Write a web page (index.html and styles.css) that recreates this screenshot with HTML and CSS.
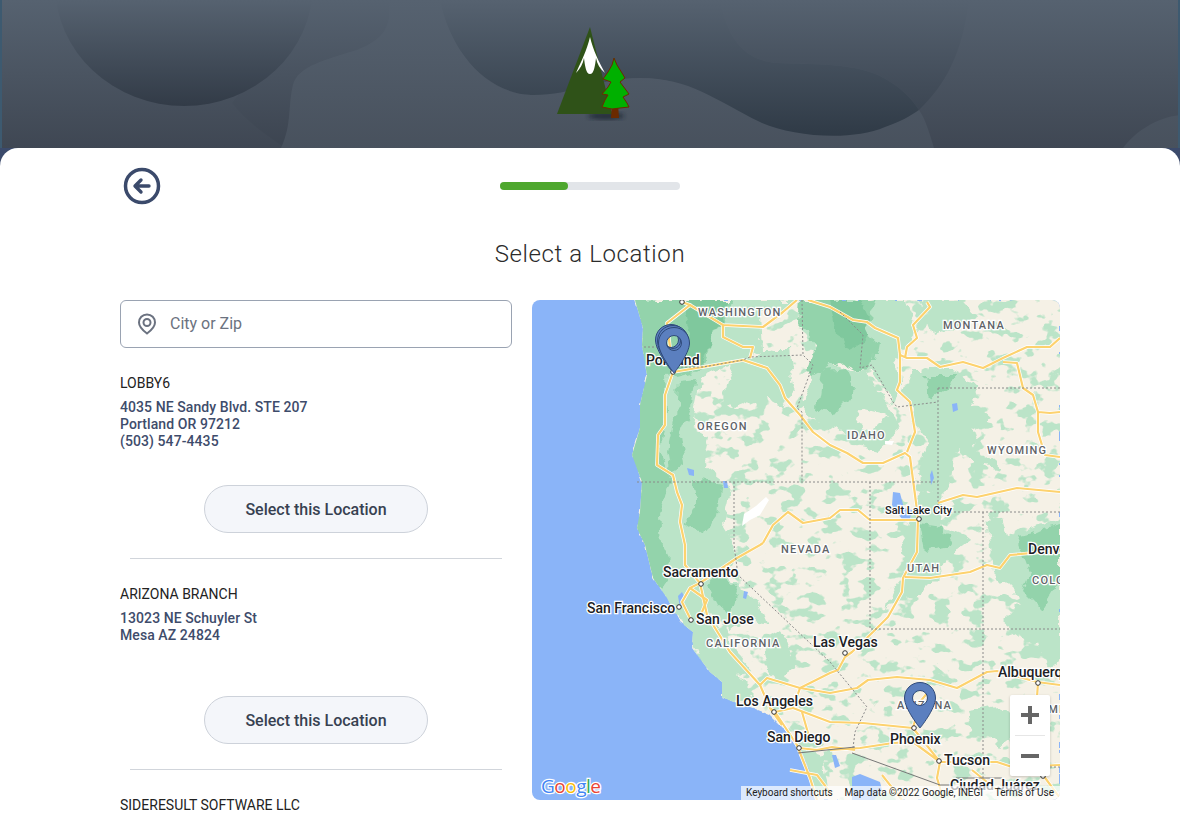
FILE: index.html
```html
<!DOCTYPE html>
<html lang="en">
<head>
<meta charset="utf-8">
<title>Select a Location</title>
<link rel="stylesheet" href="styles.css">
</head>
<body>
<header class="hero">
  <svg class="hero-art" viewBox="0 0 1180 148" aria-hidden="true">
    <defs>
      <linearGradient id="deepA" gradientUnits="userSpaceOnUse" x1="0" y1="0" x2="0" y2="106">
        <stop offset="0" stop-color="#566270"/><stop offset="1" stop-color="#323b47"/>
      </linearGradient>
      <linearGradient id="deepC" gradientUnits="userSpaceOnUse" x1="0" y1="0" x2="0" y2="136">
        <stop offset="0" stop-color="#566270"/><stop offset="1" stop-color="#2f3a46"/>
      </linearGradient>
      <linearGradient id="soft" gradientUnits="userSpaceOnUse" x1="0" y1="0" x2="0" y2="148">
        <stop offset="0" stop-color="#566270"/><stop offset="1" stop-color="#333c48"/>
      </linearGradient>
      <linearGradient id="lift" gradientUnits="userSpaceOnUse" x1="0" y1="0" x2="0" y2="148">
        <stop offset="0" stop-color="#566270"/><stop offset="1" stop-color="#48515d"/>
      </linearGradient>
      <linearGradient id="dim" gradientUnits="userSpaceOnUse" x1="0" y1="0" x2="0" y2="148">
        <stop offset="0" stop-color="#566270"/><stop offset="1" stop-color="#3c4450"/>
      </linearGradient>
      <filter id="blur"><feGaussianBlur stdDeviation="2"/></filter>
    </defs>
    <path class="shape-dim" d="M312 0L232 103C250 125 268 136 285 148C290 125 288 105 293 85C298 66 325 60 357 50C388 38 392 22 388 0Z"/>
    <ellipse class="shape-a" cx="184" cy="-15" rx="129" ry="121"/>
    <path class="shape-soft" d="M720 0C728 40 745 61 778 63C810 65 850 62 880 76C898 85 910 96 919 110C945 85 962 55 969 0Z"/>
    <path class="shape-deep" d="M440 0C450 50 485 93 531 95L640 78L919 110L919 120L881 140H700L560 110L500 110Z"/>
    <path class="shape-deep" d="M440 0H720C728 40 745 61 778 63C810 65 850 62 880 76C898 85 910 96 919 110C908 118 895 125 881 129C850 141 790 136 760 122C720 105 690 78 640 78C600 78 570 96 531 95C485 93 450 50 440 0Z"/>
    <path class="shape-lift" d="M388 0C392 22 388 38 357 50C325 60 298 66 293 85C288 105 292 125 281 148H934C930 135 926 120 919 110C910 116 900 122 885 127C850 142 790 136 760 122C715 100 690 78 640 78C600 78 570 96 531 95C485 93 450 50 440 0Z"/>
    <path class="shape-lift" d="M1123 148C1135 132 1155 118 1180 115V148Z"/>
    <ellipse class="logo-shadow" cx="606" cy="116" rx="18" ry="3.500" filter="url(#blur)"/>
    <path class="logo-mtn" d="M590 27L612 114H557Z"/>
    <path class="logo-snow" d="M590 37C593 50 599 62 605 73C600 69 597 64 596 58C595 66 594 74 590 74C586 74 585 66 584 58C583 64 580 69 576 73C581 62 587 50 590 37Z"/>
    <path class="logo-trunk" d="M612 104H618L619 118H611Z"/>
    <path class="logo-tree" d="M614 58L617 65L622 73L625 78L620 82L626 90L629 94L623 97L627 103L629 107L620 108L612 109L602 107L605 100L608 95L602 94L608 87L611 82L603 79L608 72L612 65Z"/>
  </svg>
</header>
<main class="panel">
  <div class="topbar">
    <a class="back" href="#" aria-label="Back">
      <svg viewBox="0 0 44 44" width="44" height="44" aria-hidden="true">
        <circle class="back-ring" cx="22" cy="22" r="16.500"/>
        <path class="back-arrow" d="M29 22H16M21 16L15 22L21 28"/>
      </svg>
    </a>
    <div class="progress"><div class="progress-fill"></div></div>
  </div>
  <h1 class="title">Select a Location</h1>
  <div class="columns">
    <section class="finder">
      <label class="search">
        <svg class="search-icon" viewBox="0 0 24 24" width="24" height="24" aria-hidden="true">
          <path class="search-pin" d="M12 2.500C7.400 2.500 4 6 4 10.500C4 14.500 7 17.800 12 21.500C17 17.800 20 14.500 20 10.500C20 6 16.600 2.500 12 2.500Z"/>
          <circle class="search-pin" cx="12" cy="10.500" r="3.500"/>
        </svg>
        <input class="search-input" type="text" placeholder="City or Zip">
      </label>
      <ul class="places">
        <li class="place">
          <h2 class="place-name">LOBBY6</h2>
          <p class="place-addr">4035 NE Sandy Blvd. STE 207<br>Portland OR 97212<br>(503) 547-4435</p>
          <button class="pick" type="button">Select this Location</button>
        </li>
        <li class="place">
          <h2 class="place-name">ARIZONA BRANCH</h2>
          <p class="place-addr">13023 NE Schuyler St<br>Mesa AZ 24824</p>
          <button class="pick" type="button">Select this Location</button>
        </li>
        <li class="place">
          <h2 class="place-name">SIDERESULT SOFTWARE LLC</h2>
        </li>
      </ul>
    </section>
    <section class="map">
      <svg class="map-art" viewBox="0 0 528 500" width="528" height="500" aria-label="Map of the western United States">
        <defs>
          <path id="pin" fill-rule="evenodd" d="M16 .5C7.400 .5 .5 7.300 .5 16C.5 27 16 46 16 46C16 46 31.500 27 31.500 16C31.500 7.300 24.600 .5 16 .5ZM16 8.500A7.500 7.500 0 1 1 16 23.500A7.500 7.500 0 1 1 16 8.500Z"/>
          <path id="landshape" d="M103 0L111 28L110 45L115 75L108 105L108 128L100 155L110 182L108 212L105 228L113 245L121 278L135 298L148 322L161 332L160 348L178 372L190 382L190 398L221 408L238 415L255 432L268 448L278 472L285 500H528V0Z"/>
          <clipPath id="landclip"><use href="#landshape"/></clipPath>
          <filter id="rough" x="-5%" y="-5%" width="110%" height="110%" color-interpolation-filters="sRGB">
            <feTurbulence type="fractalNoise" baseFrequency=".07" numOctaves="3" seed="4" result="n"/>
            <feDisplacementMap in="SourceGraphic" in2="n" scale="14" xChannelSelector="R" yChannelSelector="G"/>
          </filter>
          <filter id="coast" x="-5%" y="-5%" width="110%" height="110%" color-interpolation-filters="sRGB">
            <feTurbulence type="fractalNoise" baseFrequency=".12" numOctaves="2" seed="9" result="n"/>
            <feDisplacementMap in="SourceGraphic" in2="n" scale="4" xChannelSelector="R" yChannelSelector="G"/>
          </filter>
          <filter id="blotch" x="0" y="0" width="100%" height="100%" color-interpolation-filters="sRGB">
            <feTurbulence type="fractalNoise" baseFrequency=".055 .075" numOctaves="3" seed="11"/>
            <feColorMatrix type="matrix" values="0 0 0 0 .733  0 0 0 0 .894  0 0 0 0 .784  14 0 0 0 -7.900"/>
          </filter>
          <g id="roads">
            <path d="M150 2L158 5L135 23L141 72L133 95L133 125L126 135L125 165L141 175L145 192L150 205L148 222L153 245L153 265L168 283L175 315L198 352L228 385L238 408L243 412L265 445L278 478L285 500"/>
            <path d="M141 72L171 67L211 60L235 68L248 85L253 98L268 115L281 132L298 145L315 153L331 163L351 163L373 153L378 157L383 195L386 218"/>
            <path d="M158 5L191 25L191 37L211 47L221 47L218 58M191 25L231 27L251 12L265 0M276 0L298 7L321 20L335 22L343 28L366 38L368 55L368 82L365 90L378 102L383 132L375 152"/>
            <path d="M395 2L398 7L381 25L385 38L375 47L373 58M368 55L375 58L395 58L408 67L431 62L451 68L471 58L495 47L518 47L528 38M471 62L485 63L491 88L501 95L506 112L506 132L513 155L528 157M506 112L518 113L528 112"/>
            <path d="M406 203L431 195L445 197L485 188L528 192M231 243L241 225L256 212L271 223L298 218L308 210L326 210L338 220L358 220L386 220"/>
            <path d="M168 283L158 288L150 302L155 312L159 320M168 283L205 258L228 245L231 243M158 288L175 300L170 312"/>
            <path d="M386 218L385 252L371 278L370 292L356 317L341 332L320 352L313 357L306 370L298 373L268 388L261 408L243 412"/>
            <path d="M373 277L398 278L438 272L455 265L468 268L478 255L511 252L528 252"/>
            <path d="M268 388L298 393L325 388L336 380L365 377L398 380L425 388L455 372L465 371L505 382L528 385"/>
            <path d="M261 408L298 422L331 423L381 428L408 462L465 462L480 467L528 465M298 450L328 448L361 443L381 442L408 462"/>
            <path d="M506 383L503 425L511 475L528 498M381 428L388 402L396 392M408 462L405 478L411 498M267 448L285 450L300 447L323 450M258 470L285 475L300 495M350 475L370 500M440 470L465 490"/>
            <path d="M228 385L235 378L268 388M238 408L250 425M270 412L278 440"/>
          </g>
        </defs>
        <rect class="m-water" width="528" height="500"/>
        <use href="#landshape" class="m-land" filter="url(#coast)"/>
        <g clip-path="url(#landclip)">
          <rect class="blotch" x="100" width="428" height="500" filter="url(#blotch)"/>
          <g filter="url(#rough)">
            <path class="g-light" d="M95 0L103 60L100 150L100 230L121 285L150 325L175 375L200 405L225 395L205 375L222 372L195 340L175 310L195 330L215 320L235 325L225 300L205 290L195 270L205 250L190 225L198 185L172 165L178 138L160 128L170 78L230 50L228 15L270 0Z"/>
            <path class="g-mid" d="M95 0L103 60L100 150L100 230L118 280L128 290L142 270L130 245L128 215L140 175L128 150L135 110L132 78L170 68L180 40L200 0Z"/>
            <path class="g-mid" d="M145 80L165 78L160 108L148 135L152 165L140 172L136 150L143 120Z"/>
            <path class="g-dark" d="M150 0L195 0L180 40L168 64L150 60L158 35Z"/>
            <path class="g-mid" d="M162 178L190 183L185 215L170 235L155 225L165 200Z"/>
            <path class="g-mid" d="M175 285L192 270L205 295L198 315L185 305Z"/>
            <path class="g-light" d="M228 50L258 50L262 90L250 108L236 100L214 100L212 80Z"/>
            <path class="g-light" d="M202 60L240 75L250 95L225 100L200 110L190 100Z"/>
            <path class="g-mid" d="M270 0L345 0L362 40L345 62L330 72L305 60L290 85L275 70L285 45L268 25Z"/>
            <path class="g-dark" d="M298 0L328 0L340 30L325 50L305 40Z"/>
            <path class="g-light" d="M345 0L372 0L385 30L365 55L368 85L362 105L340 70L345 45L335 25Z"/>
            <path class="g-light" d="M300 65L330 72L358 105L368 130L345 150L325 145L306 130L285 125L272 105L282 75Z"/>
            <path class="g-mid" d="M290 70L315 68L325 90L305 115L285 110Z"/>
            <path class="m-land" d="M328 108L355 115L340 130L325 125Z"/>
            <path class="g-light" d="M385 0L430 0L445 18L420 30L400 38L395 15Z"/>
            <path class="g-light" d="M378 70L420 70L450 85L440 100L460 118L440 130L445 150L468 170L440 165L425 150L420 185L405 200L392 190L385 175L395 140L380 120L372 90Z"/>
            <path class="g-mid" d="M392 75L425 75L415 90L400 100Z"/>
            <path class="g-light" d="M388 195L406 195L410 228L440 240L420 255L405 275L385 295L365 300L355 312L360 290L375 270L370 240L378 215Z"/>
            <path class="g-mid" d="M390 225L410 228L420 245L395 250Z"/>
            <path class="g-light" d="M455 215L470 218L475 235L490 230L528 220V340L500 345L470 320L490 300L460 270Z"/>
            <path class="g-mid" d="M485 235L528 225V280L510 310L490 290L498 270Z"/>
            <path class="g-light" d="M505 335L528 320V360L515 365Z"/>
            <path class="g-light" d="M435 410L468 405L490 430L470 445L455 430L440 432Z"/>
            <path class="g-light" d="M230 345L250 330L262 365L248 385L235 370Z"/>
            <path class="g-light" d="M265 445L290 455L295 490L282 500L272 475Z"/>
          </g>
        </g>
        <path class="m-snow" d="M210 226L212 214L224 206L234 197L237 200L228 215L218 220Z"/>
        <path class="m-snow" d="M353 141L362 141L360 145L353 144Z"/>
        <path class="m-water" d="M361 192L368 193L372 208L380 210L378 220L372 222L365 212L360 205Z"/>
        <path class="m-water" d="M420 104L425 103L426 110L421 112Z"/>
        <path class="m-water" d="M155 168L162 170L162 176L157 175Z"/>
        <path class="m-water" d="M191 181L195 181L196 188L192 188Z"/>
        <path class="m-water" d="M212 291L216 292L214 299L211 298Z"/>
        <path class="m-water" d="M300 455L304 455L308 466L303 468Z"/>
        <path class="m-water" d="M320 477L328 474L348 482L350 490L342 500H320Z"/>
        <path class="m-water" d="M146 296L150 292L153 298L148 308Z"/>
        <path class="m-water" d="M398 175L400 170L402 178L399 185Z"/>

        <use href="#roads" class="road-case"/>
        <use href="#roads" class="road-line"/>

        <path class="border" d="M112 47H130M141 67L171 67L211 60L218 57L271 55M270 0L271 55L281 65L265 108L270 112L270 182M105 182H406M202 182V245L206 275L298 362L335 407L323 432L321 448"/>
        <path class="border" d="M308 12L331 35L328 68L340 65L361 102L365 107L406 102M406 88H528M406 88V212H420H528M338 182V329H528M451 212V478M528 467H500"/>
        <path class="mexico" d="M266 453L323 447M320 453L408 485H420L424 478H470L472 490"/>

        <g class="states">
          <text x="166" y="16">WASHINGTON</text>
          <text x="165" y="130">OREGON</text>
          <text x="411" y="29">MONTANA</text>
          <text x="315" y="139">IDAHO</text>
          <text x="455" y="154">WYOMING</text>
          <text x="249" y="253">NEVADA</text>
          <text x="375" y="272">UTAH</text>
          <text x="500" y="284">COLORADO</text>
          <text x="174" y="347">CALIFORNIA</text>
          <text x="365" y="409">ARIZONA</text>
          <text x="485" y="413">NEW MEXICO</text>
        </g>
        <g class="dots">
          <circle cx="150" cy="2" r="2.300"/><circle cx="141" cy="72" r="2.300"/><circle cx="387" cy="219" r="2.300"/>
          <circle cx="169" cy="284" r="2.300"/><circle cx="147" cy="307" r="2.300"/><circle cx="159" cy="320" r="2.300"/>
          <circle cx="242" cy="412" r="2.300"/><circle cx="267" cy="448" r="2.300"/><circle cx="313" cy="353" r="2.300"/>
          <circle cx="382" cy="428" r="2.300"/><circle cx="407" cy="461" r="2.300"/><circle cx="506" cy="383" r="2.300"/><circle cx="511" cy="476" r="2.300"/>
        </g>
        <g class="cities">
          <text x="114" y="65">Portland</text>
          <text class="city-small" x="353" y="214">Salt Lake City</text>
          <text x="131" y="277">Sacramento</text>
          <text x="55" y="313">San Francisco</text>
          <text x="164" y="324">San Jose</text>
          <text x="204" y="406">Los Angeles</text>
          <text x="235" y="442">San Diego</text>
          <text x="281" y="347">Las Vegas</text>
          <text x="358" y="444">Phoenix</text>
          <text x="412" y="465">Tucson</text>
          <text x="466" y="377">Albuquerque</text>
          <text x="496" y="254">Denver</text>
          <text x="418" y="490">Ciudad Juárez</text>
        </g>
        <g class="pins">
          <use href="#pin" x="123" y="24"/>
          <use href="#pin" x="125" y="25"/>
          <use href="#pin" x="126" y="27"/>
          <use href="#pin" x="372" y="382"/>
        </g>
      </svg>
      <div class="g-logo"><span class="g-b">G</span><span class="g-r">o</span><span class="g-y">o</span><span class="g-b">g</span><span class="g-g">l</span><span class="g-r">e</span></div>
      <div class="zoom-ctl">
        <div class="zoom-btn"><span class="zoom-h"></span><span class="zoom-v"></span></div>
        <div class="zoom-sep"></div>
        <div class="zoom-btn"><span class="zoom-h"></span></div>
      </div>
      <div class="attrib"><span>Keyboard shortcuts</span><span>Map data ©2022 Google, INEGI</span><span>Terms of Use</span></div>
    </section>
  </div>
</main>
</body>
</html>
```
FILE: styles.css
```css
* { box-sizing: border-box; }
html, body { margin: 0; height: 100%; }
body {
  background: #3b4a6b;
  font-family: Roboto, "Liberation Sans", sans-serif;
  overflow: hidden;
  color: #222;
}
.hero { height: 148px; background: linear-gradient(#566270, #3f4753); position: relative; }
.hero-art { display: block; width: 1180px; height: 148px; }
.hero::before, .hero::after { content: ""; position: absolute; top: 0; bottom: 0; width: 2px; background: #3d5a70; }
.hero::before { left: 0; }
.hero::after { right: 0; }
.shape-a { fill: url(#deepA); }
.shape-deep { fill: url(#deepC); }
.shape-soft { fill: url(#soft); }
.shape-lift { fill: url(#lift); }
.shape-dim { fill: url(#dim); }
.logo-mtn { fill: #2f5218; }
.logo-snow { fill: #fff; }
.logo-tree { fill: #00b000; stroke: #6b2a00; stroke-width: 1; stroke-linejoin: round; }
.logo-trunk { fill: #6b2a00; }
.logo-shadow { fill: #1e2530; opacity: .8; }

.panel { background: #fff; border-radius: 18px 18px 0 0; height: 668px; padding: 16px 120px 0; overflow: hidden; }
.topbar { display: grid; grid-template-columns: 1fr 180px 1fr; align-items: center; height: 44px; }
.back { display: block; width: 44px; height: 44px; }
.back svg { display: block; }
.back-ring { fill: none; stroke: #3b4a6b; stroke-width: 3.5; }
.back-arrow { fill: none; stroke: #3b4a6b; stroke-width: 3.4; stroke-linecap: round; stroke-linejoin: round; }
.progress { height: 8px; border-radius: 4px; background: #e2e5e9; grid-column: 2; }
.progress-fill { width: 68px; height: 8px; border-radius: 4px; background: #4ea72e; }
.title { margin: 30px 0 30px; font-size: 24px; line-height: 32px; font-weight: 300; letter-spacing: .6px; text-align: center; color: #2b2b2b; }

.columns { display: grid; grid-template-columns: 392px 528px; column-gap: 20px; align-items: start; }
.search { display: flex; align-items: center; height: 48px; border: 1px solid #9aa3b2; border-radius: 6px; padding: 0 14px; gap: 11px; background: #fff; }
.search-icon { flex: none; }
.search-pin { fill: none; stroke: #6b7280; stroke-width: 2; }
.search-input { border: 0; outline: 0; padding: 0 0 1px; flex: 1; min-width: 0; font: 400 16px Roboto, sans-serif; color: #222; }
.search-input::placeholder { color: #6b7280; opacity: 1; }
.places { list-style: none; margin: 25px 0 0; padding: 0; }
.place { display: flex; flex-direction: column; padding-bottom: 26px; position: relative; margin-bottom: 25px; }
.place:not(:last-child)::after { content: ""; position: absolute; left: 10px; right: 10px; bottom: 0; height: 1px; background: #d1d5db; }
.place-name { margin: 0; font-size: 14px; line-height: 20px; font-weight: 400; color: #222; }
.place-addr { margin: 6px 0 0; min-height: 51px; font-size: 14px; line-height: 17px; font-weight: 500; letter-spacing: .08px; color: #3e4c6b; }
.pick { align-self: center; width: 224px; height: 48px; margin-top: 35px; border: 1px solid #cdd2da; border-radius: 24px; background: #f4f6fa; font: 500 16px Roboto, sans-serif; color: #374151; }

.map { position: relative; width: 528px; height: 500px; border-radius: 8px; overflow: hidden; }
.map-art { display: block; }
.m-water { fill: #8ab4f8; }
.m-land { fill: #f5f1e6; }
.m-snow { fill: #fff; }
.blotch { fill: #fff; }
.g-light { fill: #bbe4c8; }
.g-mid { fill: #93d3ab; }
.g-dark { fill: #7fc89d; }
.road-case { fill: none; stroke: #fff; stroke-width: 3.6; stroke-linejoin: round; }
.road-line { fill: none; stroke: #fdd26e; stroke-width: 2.2; stroke-linejoin: round; }
.border { fill: none; stroke: #8a8a8a; stroke-width: 1; stroke-dasharray: 2 2; }
.mexico { fill: none; stroke: #777; stroke-width: 1; }
.states text { font: 500 11px Roboto, sans-serif; letter-spacing: 1.2px; fill: #5f6368; stroke: #fff; stroke-width: 2.5; paint-order: stroke; }
.cities text { font: 500 14px Roboto, sans-serif; fill: #202124; stroke: #fff; stroke-width: 2.5; paint-order: stroke; }
.cities .city-small { font-size: 11px; }
.dots circle { fill: #fff; stroke: #333; stroke-width: 1; }
.pins use { fill: #5b7fbf; stroke: #2f4a7a; stroke-width: 1; }
.g-logo { position: absolute; left: 9px; bottom: 1px; font: 400 19px "Open Sans", sans-serif; letter-spacing: -.5px; -webkit-text-stroke: 2.5px #fff; paint-order: stroke fill; line-height: 26px; }
.g-b { color: #4285f4; }
.g-r { color: #ea4335; }
.g-y { color: #fbbc05; }
.g-g { color: #34a853; }
.zoom-ctl { position: absolute; left: 478px; top: 395px; width: 40px; height: 81px; background: #fff; border-radius: 2px; box-shadow: 0 1px 3px rgba(0,0,0,.2); display: flex; flex-direction: column; align-items: center; }
.zoom-btn { position: relative; width: 40px; height: 40px; }
.zoom-h, .zoom-v { position: absolute; background: #666; }
.zoom-h { left: 11px; top: 18px; width: 18px; height: 4px; }
.zoom-v { left: 18px; top: 11px; width: 4px; height: 18px; }
.zoom-sep { width: 30px; height: 1px; background: #e6e6e6; flex: none; }
.attrib { position: absolute; right: 0; bottom: 0; left: 209px; height: 14px; background: rgba(255,255,255,.7); display: flex; justify-content: space-between; padding: 0 6px 0 5px; font-size: 10px; line-height: 13px; color: #222; }
```
